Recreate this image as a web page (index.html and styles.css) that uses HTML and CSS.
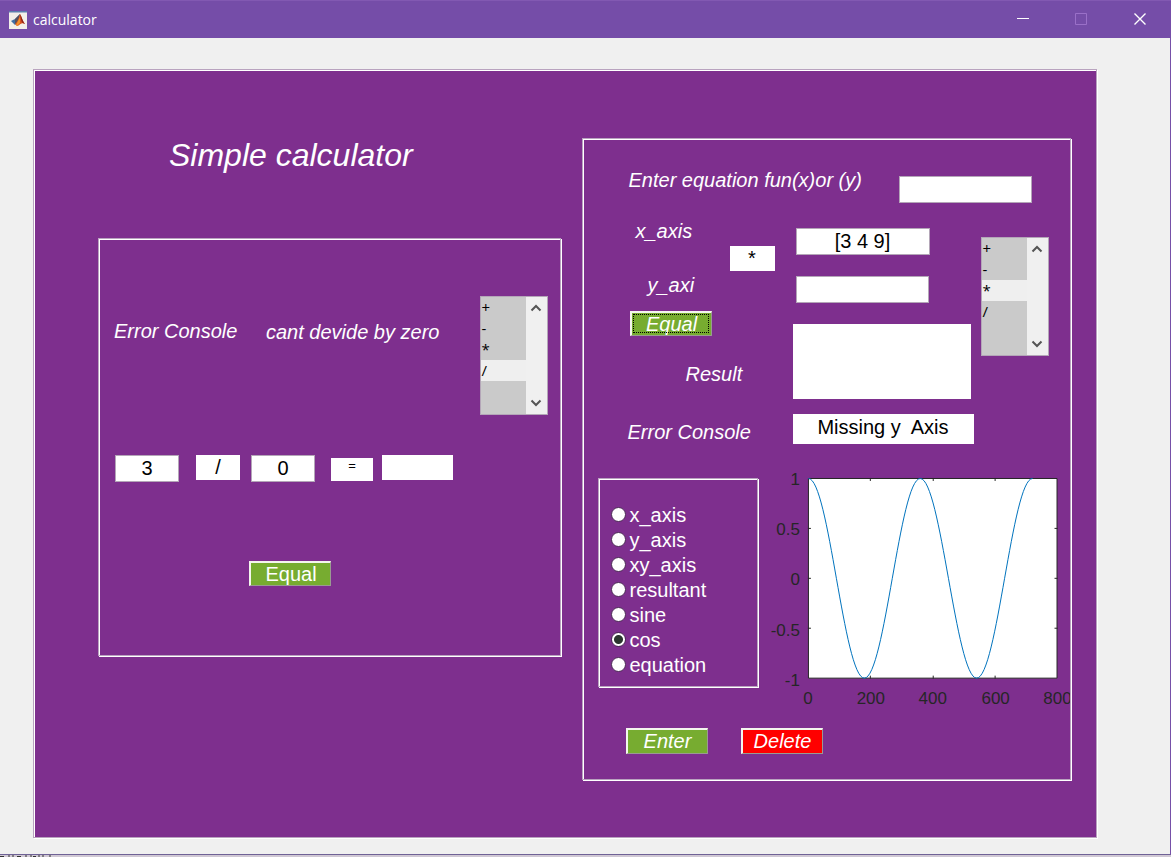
FILE: index.html
```html
<!DOCTYPE html>
<html lang="en">
<head>
<meta charset="utf-8">
<title>calculator</title>
<link rel="stylesheet" href="styles.css">
</head>
<body>
<div class="window">
  <header class="titlebar">
    <svg class="app-icon" viewBox="0 0 18 18" aria-hidden="true">
      <rect width="18" height="18" fill="#f2efe9"/>
      <path d="M0 0h18v1.500H0z" fill="#5c7fae"/>
      <path d="M2 10l4-2 5-5-2 8-3 3z" fill="#3f6da6"/>
      <path d="M6 8l5-5-1 9-4 1z" fill="#56505c"/>
      <path d="M11 3c1.500 2 2.500 7 5 10-2-1-3-1-4.500 0S9 15 8 15l-2-2c3-2 4-7 5-10z" fill="#d9531e"/>
      <path d="M11 3c1.500 2 2.500 7 5 10l-3-1.500C12 9 11.500 6 11 3z" fill="#8f2318"/>
      <path d="M9 10l2-4 0 6-3 3-1-1z" fill="#f0922b"/>
    </svg>
    <span class="app-name">calculator</span>
    <div class="window-buttons">
      <button type="button" aria-label="Minimize"><svg viewBox="0 0 13 13"><path d="M0 5.500h12"/></svg></button>
      <button type="button" aria-label="Maximize" disabled><svg viewBox="0 0 13 13"><path d="M.5.5h11v11H.5z"/></svg></button>
      <button type="button" aria-label="Close"><svg class="close-icon" viewBox="0 0 13 13"><path d="M.5.5l11 11M11.500.5l-11 11"/></svg></button>
    </div>
  </header>

  <main class="panel etched">
    <section class="simple">
      <h1>Simple calculator</h1>
      <div class="simple-box etched">
        <div class="simple-top">
          <p class="label console-label">Error Console</p>
          <p class="label console-text">cant devide by zero</p>
          <div class="listbox">
            <select size="4" aria-label="Operation">
              <option>+</option><option>-</option><option>*</option><option selected>/</option>
            </select>
            <div class="scroller">
              <button type="button" aria-label="Scroll up"><svg viewBox="0 0 12 8"><path d="M1.500 6.500L6 2l4.500 4.500"/></svg></button>
              <button type="button" aria-label="Scroll down"><svg viewBox="0 0 12 8"><path d="M1.500 1.500L6 6l4.500-4.500"/></svg></button>
            </div>
          </div>
        </div>
        <div class="operands">
          <input class="field operand" type="text" value="3" aria-label="First number">
          <output class="static sign">/</output>
          <input class="field operand" type="text" value="0" aria-label="Second number">
          <span class="static equals">=</span>
          <output class="static answer" aria-label="Answer"></output>
        </div>
        <button type="button" class="push simple-equal">Equal</button>
      </div>
    </section>

    <section class="advanced etched">
      <div class="equation">
        <label class="label" for="fun">Enter equation fun(x)or (y)</label>
        <input class="field" id="fun" type="text">
      </div>

      <div class="vectors">
        <div class="names">
          <div class="axes">
            <div class="axis-names">
              <label class="label x-name" for="x">x_axis</label>
              <label class="label y-name" for="y">y_axi</label>
              <button type="button" class="push slanted focused">Equal</button>
            </div>
            <output class="static operator">*</output>
          </div>
          <p class="label result-name">Result</p>
          <p class="label error-name">Error Console</p>
        </div>
        <div class="values">
          <input class="field x-value" id="x" type="text" value="[3 4 9]">
          <input class="field y-value" id="y" type="text">
          <output class="static result" aria-label="Result"></output>
          <output class="static message">Missing y&nbsp; Axis</output>
        </div>
        <div class="listbox">
          <select size="4" aria-label="Vector operation">
            <option>+</option><option>-</option><option selected>*</option><option>/</option>
          </select>
          <div class="scroller">
            <button type="button" aria-label="Scroll up"><svg viewBox="0 0 12 8"><path d="M1.500 6.500L6 2l4.500 4.500"/></svg></button>
            <button type="button" aria-label="Scroll down"><svg viewBox="0 0 12 8"><path d="M1.500 1.500L6 6l4.500-4.500"/></svg></button>
          </div>
        </div>
      </div>

      <div class="plotting">
        <div class="choices etched" role="radiogroup" aria-label="Plot">
          <label><input type="radio" name="plot">x_axis</label>
          <label><input type="radio" name="plot">y_axis</label>
          <label><input type="radio" name="plot">xy_axis</label>
          <label><input type="radio" name="plot">resultant</label>
          <label><input type="radio" name="plot">sine</label>
          <label><input type="radio" name="plot" checked>cos</label>
          <label><input type="radio" name="plot">equation</label>
        </div>
        <svg class="chart" viewBox="0 0 303 240" role="img" aria-label="Cosine plot">
          <path class="plot-area" d="M40.500 8.500h249v200h-249z"/>
          <path class="ticks" d="M102.500 8v3M165.500 8v3M227.500 8v3M102.500 209v-3M165.500 209v-3M227.500 209v-3M40 58.500h3M40 108.500h3M40 158.500h3M290 58.500h-3M290 108.500h-3M290 158.500h-3"/>
          <path class="curve" d="M40.500 8.500C61 8.500 76 208.500 96.500 208.500S132 8.500 152.500 8.500 188.500 208.500 209 208.500 244.500 8.500 265 8.500"/>
          <g class="y-labels">
            <text x="32" y="15">1</text><text x="32" y="65">0.5</text><text x="32" y="115">0</text><text x="32" y="166">-0.5</text><text x="32" y="216">-1</text>
          </g>
          <g class="x-labels">
            <text x="40" y="234">0</text><text x="103" y="234">200</text><text x="165" y="234">400</text><text x="228" y="234">600</text><text x="290" y="234">800</text>
          </g>
        </svg>
      </div>

      <div class="actions">
        <button type="button" class="push slanted">Enter</button>
        <button type="button" class="push slanted danger">Delete</button>
      </div>
    </section>
  </main>
</div>
<div class="behind">
  <svg viewBox="0 0 54 3" aria-hidden="true"><path d="M0 1.500h4M9 0v3M13 0v3M17 1.500h4M26 0v3M31 0v3M33 1.500h3M39 0v3M43 0v3M50 0v3"/></svg>
</div>
</body>
</html>
```
FILE: styles.css
```css
* { box-sizing: border-box; }

body {
  margin: 0;
  background: #d0c8d4;
  font: 20px/24px "Liberation Sans", Arial, sans-serif;
  color: #000;
}

h1, p { margin: 0; }

button, input, select { font: inherit; margin: 0; }

svg { display: block; }

.window {
  background: #f0f0f0;
  border-right: 1px solid #7650a8;
  border-bottom: 1px solid #6f6296;
  padding-bottom: 16px;
}

.titlebar {
  display: flex;
  align-items: center;
  height: 38px;
  margin-right: -1px;
  padding-left: 9px;
  background: #754da8;
  border-top: 1px solid #8259b2;
}

.app-icon { width: 18px; height: 18px; }

.app-name {
  margin-left: 6px;
  font: 14px/20px "Open Sans", "Noto Sans", sans-serif;
  color: #fff;
}

.window-buttons { display: flex; margin-left: auto; }

.window-buttons button {
  display: grid;
  place-items: center;
  width: 58px;
  height: 37px;
  padding: 0;
  border: 0;
  background: none;
}

.window-buttons button:last-child { width: 61px; }
.window-buttons svg { width: 13px; height: 13px; fill: none; stroke: #fff; }
.window-buttons button:disabled svg { stroke: #9a70c8; }
.window-buttons .close-icon { stroke-width: 1.4; }

.etched {
  border: 1px solid #b9a3bf;
  box-shadow: 1px 1px 0 #fff, inset 1px 1px 0 #fff;
}

.panel {
  display: grid;
  grid-template-columns: 464fr 490fr;
  gap: 20px;
  align-items: start;
  margin: 31px 73px 0 33px;
  padding: 68px 25px 57px 64px;
  background: #7e2f8e;
}

.label { display: block; font-style: italic; color: #fff; white-space: nowrap; }

h1 {
  padding-left: 71px;
  font-size: 32px;
  font-weight: normal;
  font-style: italic;
  line-height: 34px;
  color: #fff;
}

.simple-box { margin: 66px 1px 0 0; padding: 57px 12px 69px 15px; }

.simple-top { display: flex; align-items: flex-start; }
.console-label { width: 152px; margin-top: 23px; }
.console-text { margin: 24px auto 0 0; }

.operands { display: flex; align-items: flex-start; margin-top: 40px; padding-left: 1px; }

.field {
  height: 27px;
  padding: 0;
  border: 1px solid #b4a6b8;
  border-radius: 0;
  background: #fff;
  text-align: center;
}

.static { display: block; background: #fff; text-align: center; }

.operand { width: 64px; }
.sign { width: 44px; height: 25px; margin: 0 11px 0 17px; }
.equals { width: 42px; height: 23px; margin: 3px 9px 0 16px; font-size: 13px; line-height: 16px; }
.answer { width: 71px; height: 25px; }

.push {
  width: 82px;
  height: 26px;
  padding: 0 0 0 1px;
  border: 2px solid;
  border-color: #f4f6ee #9a9a92 #9a9a92 #f4f6ee;
  border-right-width: 1px;
  border-bottom-width: 1px;
  background: #77ac30;
  color: #fff;
  line-height: 22px;
}

.simple-equal { display: block; height: 25px; margin: 79px 0 0 135px; }
.slanted { font-style: italic; }
.danger { background: #f00; }
.focused { outline: 1px dotted #000; outline-offset: -4px; }

.listbox {
  display: flex;
  width: 68px;
  height: 119px;
  border: 1px solid #b4a6b8;
}

.listbox select {
  width: 45px;
  height: 117px;
  padding: 0;
  border: 0;
  border-radius: 0;
  background: #cacaca;
  overflow: hidden;
  font: 15px/21px "Open Sans", "Noto Sans", sans-serif;
  color: #000;
}

.listbox option { height: 21px; min-height: 21px; padding: 0 1px; color: #000; }
.listbox option:checked { background: #efefef linear-gradient(#efefef, #efefef); }

.scroller {
  display: flex;
  flex: 1;
  flex-direction: column;
  justify-content: space-between;
  background: #f0f0f0;
}

.scroller button {
  display: grid;
  place-items: center;
  height: 22px;
  padding: 0;
  border: 0;
  background: none;
}

.scroller svg { width: 12px; height: 8px; fill: none; stroke: #555; stroke-width: 2; }

.advanced { padding: 29px 0 25px; }

.equation { display: flex; padding-left: 46px; }
.equation .label { width: 270px; }
.equation .field { width: 133px; margin-top: 8px; }

.vectors { display: flex; align-items: flex-start; margin-top: 16px; padding-left: 47px; }
.names { width: 163px; }
.axes { display: flex; align-items: flex-start; }
.axis-names { width: 100px; }
.x-name { padding-left: 6px; }
.y-name { margin: 30px 0 14px; padding-left: 18px; }
.axis-names .push { display: block; height: 25px; }
.operator { width: 45px; height: 25px; margin-top: 27px; }
.result-name { margin-top: 26px; padding-left: 56px; }
.error-name { margin-top: 34px; margin-left: -2px; }

.values { width: 181px; padding-top: 9px; }
.values .field { display: block; margin-left: 3px; }
.values .x-value { width: 134px; }
.values .y-value { width: 133px; margin-top: 21px; }
.result { width: 178px; height: 75px; margin-top: 21px; }
.message { height: 30px; margin-top: 15px; line-height: 26px; }
.vectors .listbox { margin: 18px 0 0 7px; }

.plotting { display: flex; align-items: flex-start; margin-top: 26px; }

.choices {
  width: 160px;
  margin: 8px 10px 0 15px;
  padding: 23px 0 9px 12px;
}

.choices label { display: flex; align-items: center; gap: 4px; height: 25px; color: #fff; }

.choices input {
  appearance: none;
  width: 15px;
  height: 15px;
  margin: 0;
  border: 1px solid #4b2a55;
  border-radius: 50%;
  background: #fff;
}

.choices input:checked { background: radial-gradient(circle, #2b352e 4px, #fff 5px); }

.chart {
  flex: 1;
  min-width: 0;
  font: 17px "Liberation Sans", Arial, sans-serif;
}

.plot-area { fill: #fff; stroke: #262626; }
.ticks { fill: none; stroke: #262626; }
.curve { fill: none; stroke: #0072bd; }
.chart text { fill: #262626; }
.y-labels { text-anchor: end; }
.x-labels { text-anchor: middle; }

.actions { display: flex; gap: 33px; margin-top: 18px; padding-left: 43px; }

.behind { overflow: hidden; }
.behind svg { width: 54px; height: 3px; margin-bottom: -1px; fill: none; stroke: #333; }
```
